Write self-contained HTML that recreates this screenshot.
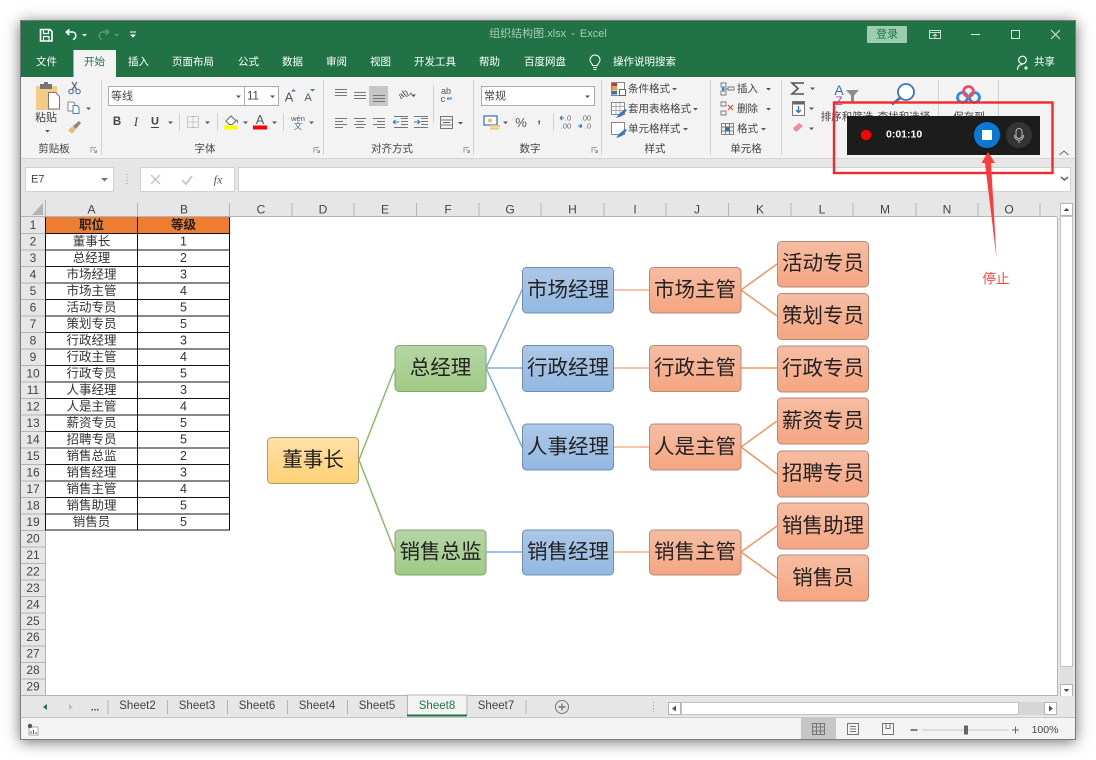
<!DOCTYPE html>
<html><head><meta charset="utf-8"><style>
html,body{margin:0;padding:0;background:#fff;width:1096px;height:760px;overflow:hidden}
#w{position:absolute;left:20px;top:20px;width:1056px;height:720px;box-shadow:0 2px 14px rgba(0,0,0,.55);background:#fff}
svg{position:absolute;left:0;top:0;filter:blur(.3px)}
text{font-family:"Liberation Sans","Noto Sans CJK SC",sans-serif;dominant-baseline:central;font-size:10.5px;fill:#444}
.m{text-anchor:middle}
.tab{fill:#fff;font-size:10.5px;text-anchor:middle}
.rb{fill:#444;font-size:10.5px}
.grp{fill:#444;font-size:10.5px;text-anchor:middle}
.hd{fill:#444;font-size:12px;text-anchor:middle}
.c{fill:#333;font-size:12.5px;text-anchor:middle}
.s{fill:#222;font-size:20.5px;text-anchor:middle}
.sh{fill:#444;font-size:11.5px;text-anchor:middle}
.ar{fill:#555}
</style></head><body><div id="w"></div>
<svg width="1096" height="760" viewBox="0 0 1096 760" xmlns="http://www.w3.org/2000/svg">
<defs>
<linearGradient id="gy" x1="0" y1="0" x2="0" y2="1"><stop offset="0" stop-color="#ffe0a8"/><stop offset="1" stop-color="#ffd175"/></linearGradient>
<linearGradient id="gg" x1="0" y1="0" x2="0" y2="1"><stop offset="0" stop-color="#b5d5a5"/><stop offset="1" stop-color="#a0ca84"/></linearGradient>
<linearGradient id="gb" x1="0" y1="0" x2="0" y2="1"><stop offset="0" stop-color="#adc7e6"/><stop offset="1" stop-color="#93b8e2"/></linearGradient>
<linearGradient id="go" x1="0" y1="0" x2="0" y2="1"><stop offset="0" stop-color="#f6bda3"/><stop offset="1" stop-color="#f5a581"/></linearGradient>
</defs>
<!-- window base -->
<rect x="20.5" y="20.5" width="1055" height="719" fill="#e6e6e6" stroke="#7a7a7a"/>
<rect x="21" y="21" width="1054" height="56" fill="#217346"/>
<rect x="21" y="77" width="1054" height="81" fill="#f3f3f3"/>
<rect x="21" y="158" width="1054" height="1" fill="#d4d4d4"/>
<!-- active tab -->
<rect x="73.5" y="50" width="42.5" height="28" fill="#f3f3f3"/>
<!-- QAT -->
<g fill="none" stroke="#fff" stroke-width="1.6">
<path d="M40.5 29.5h9.5l2 2v9.5h-11.5z"/><path d="M43.5 30v3.5h5V30M43.5 41v-4.5h5.5V41" stroke-width="1.2"/>
<path d="M66 32l3.5-2.5M66 32l3.5 3M66.5 32h6c4 0 4.5 6.5 .5 7.5"/>
</g>
<path d="M82 34h5l-2.500 2.500z" fill="#fff"/>
<g fill="none" stroke="#5c9c78" stroke-width="1.4"><path d="M109 32l-3.500-2.500M109 32l-3.500 3M108.500 32h-6c-4 0-4.500 6.500-.5 7.500"/></g>
<path d="M114 34h5l-2.500 2.500z" fill="#5c9c78"/>
<path d="M130 31.500h6v1h-6zM130 34.500h6l-3 3z" fill="#fff"/>
<!-- title -->
<text x="548" y="34" class="m" style="fill:#a6cdb6;font-size:11px;word-spacing:2px">组织结构图.xlsx  -  Excel</text>
<rect x="867" y="26" width="40" height="17" rx="1" fill="#9ccdb0"/>
<text x="887" y="34.500" class="m" style="fill:#217346;font-size:11px">登录</text>
<g fill="none" stroke="#c6dfd0" stroke-width="1"><rect x="929.500" y="30.500" width="11" height="8"/><path d="M929.500 32.500h11M935 38v-4M933 36l2-2 2 2"/>
<path d="M971 34.500h9" stroke="#dcebe2"/><rect x="1011.500" y="30.500" width="8" height="8" stroke="#dcebe2"/><path d="M1051 30l9 9M1060 30l-9 9" stroke="#dcebe2"/></g>
<g fill="none" stroke="#fff" stroke-width="1.1"><circle cx="1022.500" cy="60" r="3.800"/><path d="M1017.500 70c0-4 2-5.500 5-5.500M1024 68h4M1026 66v4"/></g>
<text x="1034" y="62" style="fill:#fff;font-size:10.500px">共享</text>
<!-- tabs -->
<text x="46.500" y="62" class="tab">文件</text>
<text x="94.500" y="62" class="tab" style="fill:#217346">开始</text>
<text x="138.500" y="62" class="tab">插入</text>
<text x="193" y="62" class="tab">页面布局</text>
<text x="248.500" y="62" class="tab">公式</text>
<text x="292.500" y="62" class="tab">数据</text>
<text x="336.500" y="62" class="tab">审阅</text>
<text x="380.500" y="62" class="tab">视图</text>
<text x="435" y="62" class="tab">开发工具</text>
<text x="489.500" y="62" class="tab">帮助</text>
<text x="545" y="62" class="tab">百度网盘</text>
<text x="644.500" y="62" class="tab">操作说明搜索</text>
<g fill="none" stroke="#fff" stroke-width="1"><path d="M593 67.500h4M593.500 69.500h3M592.500 65.500c0-2-2.500-2.800-2.500-5.500a5 5 0 0 1 10 0c0 2.700-2.500 3.500-2.500 5.500z"/></g>
<!-- ribbon separators -->
<g fill="#d2d2d2"><rect x="101" y="80" width="1" height="75"/><rect x="323" y="80" width="1" height="75"/><rect x="473" y="80" width="1" height="75"/><rect x="601" y="80" width="1" height="75"/><rect x="710" y="80" width="1" height="75"/><rect x="781" y="80" width="1" height="75"/><rect x="938" y="80" width="1" height="55"/><rect x="998" y="80" width="1" height="55"/>
<rect x="433" y="85" width="1" height="38"/><rect x="553" y="113" width="1" height="18"/><rect x="179" y="113" width="1" height="18"/><rect x="217" y="113" width="1" height="18"/><rect x="283" y="113" width="1" height="18"/></g>
<!-- clipboard group -->
<rect x="36" y="86" width="21" height="24" fill="#f2cc85"/>
<rect x="40" y="84" width="12" height="5" fill="#777"/><rect x="44" y="82" width="4" height="3" fill="#777"/>
<path d="M48.500 92.500h7l4 4v12.500h-11z" fill="#fff" stroke="#777"/>
<text x="46" y="118" class="m" style="fill:#444;font-size:11px">粘贴</text>
<path d="M45 130h5l-2.500 2.500z" class="ar"/>
<g fill="none" stroke="#4a7fb5" stroke-width="1.200"><circle cx="71" cy="91.500" r="2.200"/><circle cx="78" cy="91.500" r="2.200"/></g>
<path d="M72 90l5-8M77 90l-5-8" stroke="#666" stroke-width="1.200"/>
<path d="M68 102h5l2 2v7h-7z" fill="#fff" stroke="#888"/><path d="M73 105.500h4l2 2v6h-6z" fill="#fff" stroke="#4a7fb5"/>
<path d="M86 107.500h5l-2.500 2.500z" class="ar"/>
<path d="M68 130l5-4 3 3-4 5z" fill="#e6bd7d"/><path d="M73 126l6-5 2 2-5 6z" fill="#8a8a8a"/>
<text x="54" y="149" class="grp">剪贴板</text>
<g fill="none" stroke="#888" stroke-width=".8"><path d="M91 152.500v-5h5M93 149l3.500 3.500M96.500 150v2.500H94"/>
<path d="M314 152.500v-5h5M316 149l3.500 3.500M319.500 150v2.500H317"/><path d="M464 152.500v-5h5M466 149l3.500 3.500M469.500 150v2.500H467"/><path d="M592 152.500v-5h5M594 149l3.500 3.500M597.500 150v2.500H595"/></g>
<!-- font group -->
<rect x="108.500" y="86.500" width="170" height="19" fill="#fff" stroke="#ababab"/><path d="M244.500 86v20" stroke="#ababab"/>
<text x="111" y="96.500" style="fill:#444;font-size:11px">等线</text>
<text x="247" y="96.500" style="fill:#444;font-size:11.500px">11</text>
<path d="M236 95.500h5l-2.500 2.500zM270 95.500h5l-2.500 2.500z" class="ar"/>
<text x="289" y="97" class="m" style="font-size:13px;fill:#555">A</text><text x="308" y="98" class="m" style="font-size:11px;fill:#555">A</text>
<path d="M291 91.500l2.500-2.500 2.500 2.500zM310 89h5l-2.500 2.500z" fill="#3a78b5"/>
<text x="117" y="122" class="m" style="font-weight:bold;font-size:11.500px;fill:#444">B</text>
<text x="136" y="122" class="m" style="font-style:italic;font-family:'Liberation Serif',serif;font-size:12.500px;fill:#444">I</text>
<text x="155" y="121.500" class="m" style="font-weight:bold;font-size:11px;fill:#444">U</text><rect x="151" y="127" width="8" height="1" fill="#444"/>
<path d="M168 121.500h5l-2.500 2.500zM205 121.500h5l-2.500 2.500zM243 121.500h5l-2.500 2.500zM272 121.500h5l-2.500 2.500zM309 121.500h5l-2.500 2.500zM86 107.500z" class="ar"/>
<rect x="187.500" y="116.500" width="11" height="11" fill="none" stroke="#999" stroke-dasharray="1 1"/><path d="M187.500 122h11M193 116.500v11" stroke="#aaa" stroke-dasharray="1 1"/>
<path d="M226 121l5-5 5 5-4 3.500h-2.500z" fill="#fff" stroke="#666"/><path d="M236 119c2 1 2.500 3 1.500 4.500z" fill="#3a78b5"/>
<rect x="224" y="125.500" width="14" height="4" fill="#ffff00"/>
<text x="260" y="120" class="m" style="font-size:12.500px;fill:#555">A</text><rect x="253" y="125.500" width="14" height="4" fill="#f00"/>
<text x="298" y="118.500" class="m" style="font-size:7.500px;fill:#555">wén</text><text x="298" y="126" class="m" style="font-size:8.500px;fill:#2a72b8">文</text>
<text x="205" y="149" class="grp">字体</text>
<!-- alignment -->
<rect x="369" y="86" width="19" height="20" fill="#c6c6c6"/>
<g stroke="#777" stroke-width="1" fill="none">
<path d="M335 89.500h12M335 92.500h12M335 95.500h12"/><path d="M354 92.500h12M354 95.500h12M354 98.500h12"/><path d="M373 95.500h12M373 98.500h12M373 101.500h12"/>
<path d="M335 118.500h12M335 121.500h8M335 124.500h12M335 127.500h8"/><path d="M354 118.500h12M356 121.500h8M354 124.500h12M356 127.500h8"/><path d="M373 118.500h12M377 121.500h8M373 124.500h12M377 127.500h8"/>
<path d="M401 118.500h7M401 121.500h7M401 124.500h7M394 118h0M394 127.500h14M394 116.500h14"/><path d="M421 118.500h7M421 121.500h7M421 124.500h7M414 127.500h14M414 116.500h14"/>
<rect x="440.500" y="116.500" width="12" height="12"/><path d="M440.500 120h12M440.500 125h12"/>
</g>
<path d="M393 122h6M393 122l2.500-2M393 122l2.500 2M420 122h-6M420 122l-2.500-2M420 122l-2.500 2M443 122.500h7" stroke="#2a72b8" fill="none"/>
<text x="403" y="94" class="m" transform="rotate(-35 403 94)" style="font-size:9px;fill:#555">ab</text><path d="M406 97l6-4M412 93l-2 .5" stroke="#777" fill="none"/>
<path d="M411 94.500h5l-2.500 2.500zM458 122h5l-2.500 2.500z" class="ar"/>
<text x="446" y="91" class="m" style="font-size:9px;fill:#555">ab</text><text x="443" y="99" class="m" style="font-size:9px;fill:#555">c</text><path d="M447 99h4v-2M447 99l1.500-1.500" stroke="#2a72b8" fill="none"/>
<text x="392" y="149" class="grp">对齐方式</text>
<!-- number -->
<rect x="481.500" y="86.500" width="113" height="19" fill="#fff" stroke="#ababab"/>
<text x="484" y="96.500" style="fill:#444;font-size:11px">常规</text>
<path d="M585 95.500h5l-2.500 2.500zM503 121.500h5l-2.500 2.500z" class="ar"/>
<rect x="484" y="116" width="13" height="9" fill="#fff" stroke="#2a72b8" stroke-width="1.200"/><circle cx="490" cy="120.500" r="2" fill="#e8b96a"/><rect x="490" y="125" width="10" height="2" fill="#f0c878"/><rect x="490" y="127.500" width="9" height="2" fill="#f0c878"/>
<text x="521" y="122.500" class="m" style="font-size:13px;fill:#555">%</text>
<text x="539" y="118" class="m" style="font-size:13px;font-weight:bold;fill:#555">,</text>
<text x="568" y="118" class="m" style="font-size:7.500px;fill:#666">.0</text><text x="566" y="126" class="m" style="font-size:7.500px;fill:#666">.00</text>
<text x="586" y="118" class="m" style="font-size:7.500px;fill:#666">.00</text><text x="588" y="126" class="m" style="font-size:7.500px;fill:#666">.0</text>
<path d="M560 118h4M560 118l2-2M560 118l2 2M578 126h4M582 126l-2-2M582 126l-2 2" stroke="#2a72b8" fill="none"/>
<text x="530" y="149" class="grp">数字</text>
<!-- styles -->
<rect x="611.500" y="82.500" width="13" height="13" fill="#fff" stroke="#888"/><rect x="612" y="83" width="5" height="3.500" fill="#c0392b"/><rect x="612" y="87" width="5" height="3.500" fill="#e8a33d"/><rect x="612" y="91" width="5" height="3.500" fill="#2a72b8"/><rect x="619.500" y="89.500" width="6" height="6" fill="#fff" stroke="#666"/>
<text x="628" y="89" class="rb">条件格式</text><path d="M672 88h5l-2.500 2.500z" class="ar"/>
<rect x="611.500" y="102.500" width="13" height="12" fill="#fff" stroke="#888"/><path d="M611.500 106.500h13M611.500 110.500h13M616 102.500v12M620 102.500v12" stroke="#aaa"/><path d="M616 118l3-4 6-5 2 1-5 6z" fill="#3a78b5"/>
<text x="628" y="109" class="rb">套用表格格式</text><path d="M693 108h5l-2.500 2.500z" class="ar"/>
<rect x="611.500" y="122.500" width="13" height="12" fill="#fff" stroke="#888"/><path d="M616 138l3-4 6-5 2 1-5 6z" fill="#3a78b5"/>
<text x="628" y="129" class="rb">单元格样式</text><path d="M683 128h5l-2.500 2.500z" class="ar"/>
<text x="655" y="149" class="grp">样式</text>
<!-- cells -->
<g fill="none" stroke="#777" stroke-width=".9"><path d="M721 83h5v4h-5zM721 91h5v4h-5zM728 87h6v3h-6z"/><path d="M721 102h5v4h-5zM721 111h5v4h-5z"/><rect x="721.500" y="123.500" width="12" height="11"/><path d="M721.500 127h12M721.500 131h12M725.500 123.500v11M729.500 123.500v11"/></g>
<path d="M722 89h6M722 89l2-2M722 89l2 2" stroke="#2a72b8" fill="none"/><path d="M728 105l5 5M733 105l-5 5" stroke="#d9572f" fill="none" stroke-width="1.200"/><rect x="725" y="127.500" width="4.500" height="3.500" fill="#2a72b8"/>
<text x="737" y="89" class="rb">插入</text><text x="737" y="109" class="rb">删除</text><text x="737" y="129" class="rb">格式</text>
<path d="M766 88h5l-2.500 2.500zM766 108h5l-2.500 2.500zM761 128h5l-2.500 2.500z" class="ar"/>
<text x="746" y="149" class="grp">单元格</text>
<!-- editing -->
<path d="M804 83h-12l6 5.500-6 5.500h12" fill="none" stroke="#555" stroke-width="1.600"/>
<rect x="792.500" y="101.500" width="12" height="14" fill="#fff" stroke="#777"/><rect x="793" y="102" width="11" height="2.500" fill="#666"/><path d="M798.500 106v6M796 110l2.500 2.500 2.500-2.500" stroke="#2a72b8" fill="none" stroke-width="1.300"/>
<path d="M793 128l6-5 4 3-6 5.500h-2z" fill="#ec8f9f"/>
<path d="M810 87.500h5l-2.500 2.500zM809 107.500h5l-2.500 2.500zM809 127.500h5l-2.500 2.500z" class="ar"/>
<text x="839" y="90" class="m" style="font-size:14px;fill:#2a72b8">A</text><text x="839" y="101" class="m" style="font-size:12px;fill:#8a5cbf">Z</text>
<path d="M846 90h13l-5 5.500v6h-3v-6z" fill="#8c8c8c"/>
<circle cx="906" cy="92" r="8" fill="#fff" stroke="#3a78b5" stroke-width="1.800"/><path d="M900 98l-8 6.500" stroke="#3a78b5" stroke-width="2.600"/>
<circle cx="962.500" cy="97.500" r="5" fill="none" stroke="#2a8de0" stroke-width="2.800"/><circle cx="974.500" cy="97.500" r="5" fill="none" stroke="#2a8de0" stroke-width="2.800"/><circle cx="968.500" cy="91.500" r="5" fill="none" stroke="#e8506a" stroke-width="2.800"/>
<text x="847" y="117" class="m" style="fill:#444;font-size:10.500px">排序和筛选</text>
<text x="904" y="117" class="m" style="fill:#444;font-size:10.500px">查找和选择</text>
<text x="969" y="117" class="m" style="fill:#444;font-size:10.500px">保存到</text>
<path d="M1059.500 155l4.500-4 4.500 4" fill="none" stroke="#666"/>
<!-- formula bar -->
<rect x="25.500" y="167.500" width="88" height="24" fill="#fff" stroke="#d2d2d2"/>
<text x="31" y="179.500" style="font-size:11px;fill:#444">E7</text><path d="M101 178h7l-3.500 3.500z" fill="#777"/>
<path d="M127 174v1M127 177v1M127 180v1M127 183v1" stroke="#999"/>
<rect x="140.500" y="167.500" width="94" height="24" fill="#fff" stroke="#d2d2d2"/>
<path d="M151 175l9 9M160 175l-9 9" stroke="#c6c6c6" stroke-width="1.500"/><path d="M182 180l4 4 6-8" fill="none" stroke="#c6c6c6" stroke-width="1.800"/>
<text x="218" y="179.500" class="m" style="font-family:'Liberation Serif',serif;font-style:italic;font-size:12px;fill:#555">fx</text>
<rect x="238.500" y="167.500" width="832" height="24" fill="#fff" stroke="#d2d2d2"/>
<path d="M1061 177l3.500 3 3.500-3" fill="none" stroke="#666" stroke-width="1.500"/>
<!-- sheet -->
<rect x="45" y="217" width="1012" height="478" fill="#fff"/>
<rect x="21" y="200" width="1036" height="17" fill="#e6e6e6"/>
<rect x="21" y="217" width="24" height="478" fill="#e6e6e6"/>
<path d="M43 203v12H32z" fill="#b4b4b4"/>
<g stroke="#b4b4b4" fill="none">
<path d="M21 216.500h1036M45.500 200v495M137.500 203v14M229.500 203v14M292 203v14M354 203v14M416.500 203v14M479 203v14M541 203v14M604 203v14M666 203v14M728.500 203v14M791 203v14M853 203v14M916 203v14M978 203v14M1040 203v14"/>
<path d="M21 233.500h24M21 250h24M21 266.500h24M21 283h24M21 299.500h24M21 316h24M21 332.500h24M21 349h24M21 365.500h24M21 382h24M21 398.500h24M21 415h24M21 431.500h24M21 448h24M21 464.500h24M21 481h24M21 497.500h24M21 514h24M21 530.500h24M21 547h24M21 563.500h24M21 580h24M21 596.500h24M21 613h24M21 629.500h24M21 646h24M21 662.500h24M21 679h24M21 695.500h1037M1057.500 217v479"/>
</g>
<text x="91.500" y="209.500" class="hd">A</text><text x="184" y="209.500" class="hd">B</text><text x="261" y="209.500" class="hd">C</text><text x="323" y="209.500" class="hd">D</text><text x="385" y="209.500" class="hd">E</text><text x="448" y="209.500" class="hd">F</text><text x="510" y="209.500" class="hd">G</text><text x="572.500" y="209.500" class="hd">H</text><text x="635" y="209.500" class="hd">I</text><text x="697" y="209.500" class="hd">J</text><text x="760" y="209.500" class="hd">K</text><text x="822" y="209.500" class="hd">L</text><text x="885" y="209.500" class="hd">M</text><text x="947" y="209.500" class="hd">N</text><text x="1009" y="209.500" class="hd">O</text>
<text x="33" y="225.200" class="hd">1</text><text x="33" y="241.700" class="hd">2</text><text x="33" y="258.200" class="hd">3</text><text x="33" y="274.700" class="hd">4</text><text x="33" y="291.200" class="hd">5</text><text x="33" y="307.600" class="hd">6</text><text x="33" y="324.100" class="hd">7</text><text x="33" y="340.600" class="hd">8</text><text x="33" y="357.100" class="hd">9</text><text x="33" y="373.600" class="hd">10</text><text x="33" y="390" class="hd">11</text><text x="33" y="406.500" class="hd">12</text><text x="33" y="423" class="hd">13</text><text x="33" y="439.500" class="hd">14</text><text x="33" y="456" class="hd">15</text><text x="33" y="472.400" class="hd">16</text><text x="33" y="488.900" class="hd">17</text><text x="33" y="505.400" class="hd">18</text><text x="33" y="521.900" class="hd">19</text><text x="33" y="538.400" class="hd">20</text><text x="33" y="554.800" class="hd">21</text><text x="33" y="571.300" class="hd">22</text><text x="33" y="587.800" class="hd">23</text><text x="33" y="604.300" class="hd">24</text><text x="33" y="620.800" class="hd">25</text><text x="33" y="637.200" class="hd">26</text><text x="33" y="653.700" class="hd">27</text><text x="33" y="670.200" class="hd">28</text><text x="33" y="686.700" class="hd">29</text>
<!-- table -->
<rect x="45.500" y="217" width="184" height="16.500" fill="#ed7d31"/>
<path d="M45.500 217v313M137.500 217v313M229.500 217v313M45 233.500h185M45 250h185M45 266.500h185M45 283h185M45 299.500h185M45 316h185M45 332.500h185M45 349h185M45 365.500h185M45 382h185M45 398.500h185M45 415h185M45 431.500h185M45 448h185M45 464.500h185M45 481h185M45 497.500h185M45 514h185M45 530h185" stroke="#111" fill="none"/>
<text x="91.500" y="225.200" class="c" style="font-weight:bold;fill:#222">职位</text><text x="183.500" y="225.200" class="c" style="font-weight:bold;fill:#222">等级</text>
<text x="91.500" y="241.700" class="c">董事长</text><text x="183.500" y="241.700" class="c">1</text>
<text x="91.500" y="258.200" class="c">总经理</text><text x="183.500" y="258.200" class="c">2</text>
<text x="91.500" y="274.700" class="c">市场经理</text><text x="183.500" y="274.700" class="c">3</text>
<text x="91.500" y="291.200" class="c">市场主管</text><text x="183.500" y="291.200" class="c">4</text>
<text x="91.500" y="307.600" class="c">活动专员</text><text x="183.500" y="307.600" class="c">5</text>
<text x="91.500" y="324.100" class="c">策划专员</text><text x="183.500" y="324.100" class="c">5</text>
<text x="91.500" y="340.600" class="c">行政经理</text><text x="183.500" y="340.600" class="c">3</text>
<text x="91.500" y="357.100" class="c">行政主管</text><text x="183.500" y="357.100" class="c">4</text>
<text x="91.500" y="373.600" class="c">行政专员</text><text x="183.500" y="373.600" class="c">5</text>
<text x="91.500" y="390" class="c">人事经理</text><text x="183.500" y="390" class="c">3</text>
<text x="91.500" y="406.500" class="c">人是主管</text><text x="183.500" y="406.500" class="c">4</text>
<text x="91.500" y="423" class="c">薪资专员</text><text x="183.500" y="423" class="c">5</text>
<text x="91.500" y="439.500" class="c">招聘专员</text><text x="183.500" y="439.500" class="c">5</text>
<text x="91.500" y="456" class="c">销售总监</text><text x="183.500" y="456" class="c">2</text>
<text x="91.500" y="472.400" class="c">销售经理</text><text x="183.500" y="472.400" class="c">3</text>
<text x="91.500" y="488.900" class="c">销售主管</text><text x="183.500" y="488.900" class="c">4</text>
<text x="91.500" y="505.400" class="c">销售助理</text><text x="183.500" y="505.400" class="c">5</text>
<text x="91.500" y="521.900" class="c">销售员</text><text x="183.500" y="521.900" class="c">5</text>
<!-- connectors -->
<g fill="none" stroke-width="1.500">
<path d="M359 460L395 368M359 460L395 552" stroke="#8abb68"/>
<path d="M486 368L522 290M486 368H522M486 368L522 447M486 552H522" stroke="#7eaedd"/>
<path d="M614 290H649M614 368H649M614 447H649M614 552H649" stroke="#f4b18e"/>
<path d="M741 290L777 264M741 290L777 316M741 368H777M741 447L777 421M741 447L777 474M741 552L777 526M741 552L777 578" stroke="#f0975f"/>
</g>
<!-- nodes -->
<g stroke-width="1">
<rect x="267.500" y="437.500" width="91" height="46" rx="4" fill="url(#gy)" stroke="#b09a6a"/>
<rect x="395" y="345.500" width="91" height="46" rx="4" fill="url(#gg)" stroke="#86a573"/>
<rect x="395" y="530" width="91" height="45" rx="4" fill="url(#gg)" stroke="#86a573"/>
<g fill="url(#gb)" stroke="#6f8db0">
<rect x="522.500" y="267.500" width="91" height="45.500" rx="4"/><rect x="522.500" y="345.500" width="91" height="46" rx="4"/><rect x="522.500" y="424" width="91" height="46" rx="4"/><rect x="522.500" y="530" width="91" height="45" rx="4"/>
</g>
<g fill="url(#go)" stroke="#b58a76">
<rect x="649.500" y="267.500" width="91.500" height="45.500" rx="4"/><rect x="649.500" y="345.500" width="91.500" height="46" rx="4"/><rect x="649.500" y="424" width="91.500" height="46" rx="4"/><rect x="649.500" y="530" width="91.500" height="45" rx="4"/>
<rect x="777.500" y="241.500" width="91" height="45.500" rx="4"/><rect x="777.500" y="293.500" width="91" height="46" rx="4"/><rect x="777.500" y="346" width="91" height="46" rx="4"/><rect x="777.500" y="398" width="91" height="46" rx="4"/><rect x="777.500" y="451" width="91" height="46" rx="4"/><rect x="777.500" y="503" width="91" height="46" rx="4"/><rect x="777.500" y="555" width="91" height="46" rx="4"/>
</g>
</g>
<text x="313" y="460" class="s">董事长</text>
<text x="440.500" y="368" class="s">总经理</text>
<text x="440.500" y="552" class="s">销售总监</text>
<text x="568" y="290" class="s">市场经理</text><text x="568" y="368" class="s">行政经理</text><text x="568" y="447" class="s">人事经理</text><text x="568" y="552" class="s">销售经理</text>
<text x="695" y="290" class="s">市场主管</text><text x="695" y="368" class="s">行政主管</text><text x="695" y="447" class="s">人是主管</text><text x="695" y="552" class="s">销售主管</text>
<text x="823" y="263.500" class="s">活动专员</text><text x="823" y="316" class="s">策划专员</text><text x="823" y="368.500" class="s">行政专员</text><text x="823" y="421" class="s">薪资专员</text><text x="823" y="473.500" class="s">招聘专员</text><text x="823" y="526" class="s">销售助理</text><text x="823" y="578" class="s">销售员</text>
<!-- v scrollbar -->
<rect x="1060" y="203" width="13" height="493" fill="#e0e0e0"/>
<rect x="1060.500" y="203.500" width="12" height="12" fill="#fff" stroke="#b4b4b4"/><path d="M1063.500 211h6l-3-3z" fill="#555"/>
<rect x="1060.500" y="216.500" width="12" height="450" fill="#fff" stroke="#c2c2c2"/>
<rect x="1060.500" y="684.500" width="12" height="12" fill="#fff" stroke="#b4b4b4"/><path d="M1063.500 689h6l-3 3z" fill="#555"/>
<!-- sheet tabs -->
<rect x="21" y="696" width="1054" height="22" fill="#e6e6e6"/>
<rect x="21" y="717" width="1054" height="1" fill="#c8c8c8"/>
<rect x="21" y="718" width="1054" height="21" fill="#f3f3f3"/>
<path d="M43 707l4-3v6z" fill="#217346"/><path d="M73 707l-4-3v6z" fill="#c0c0c0"/>
<text x="95" y="708" class="m" style="font-weight:bold;font-size:10px;fill:#444">...</text>
<rect x="407" y="695" width="60" height="20" fill="#f3f3f3"/>
<path d="M407.500 715v-20h59.500v20" fill="none" stroke="#b4b4b4"/>
<rect x="407" y="714.500" width="60" height="2" fill="#217346"/>
<path d="M108 700v14M167.500 700v14M227.500 700v14M287.500 700v14M347.500 700v14M526 700v14" stroke="#b4b4b4"/>
<text x="137.500" y="706" class="sh">Sheet2</text><text x="197" y="706" class="sh">Sheet3</text><text x="257" y="706" class="sh">Sheet6</text><text x="317" y="706" class="sh">Sheet4</text><text x="377" y="706" class="sh">Sheet5</text><text x="437" y="706" class="sh" style="fill:#217346">Sheet8</text><text x="496" y="706" class="sh">Sheet7</text>
<circle cx="562" cy="707" r="6.500" fill="none" stroke="#777"/><path d="M558.500 707h7M562 703.500v7" stroke="#777" stroke-width="1.400"/>
<path d="M653.500 702v1M653.500 705v1M653.500 708v1M653.500 711v1" stroke="#999"/>
<rect x="668" y="702" width="389" height="13" fill="#d6d6d6"/>
<rect x="668.500" y="702.500" width="12" height="12" fill="#fff" stroke="#b4b4b4"/><path d="M672 708.500l4-3v6z" fill="#555"/>
<rect x="681.500" y="702.500" width="337" height="12" fill="#fff" stroke="#c2c2c2"/>
<rect x="1044.500" y="702.500" width="12" height="12" fill="#fff" stroke="#b4b4b4"/><path d="M1053 708.500l-4-3v6z" fill="#555"/>
<!-- status bar -->
<rect x="29" y="727" width="9" height="8" fill="#fff" stroke="#888" stroke-width=".7"/><circle cx="30" cy="726" r="2.200" fill="#555"/><path d="M31 734v-3M33.500 734v-4M36 734v-2" stroke="#666"/>
<rect x="801" y="718" width="35" height="21" fill="#c6c6c6"/>
<g fill="none" stroke="#777"><rect x="812.500" y="723.500" width="12" height="11"/><path d="M812.500 727h12M812.500 731h12M816.500 723.500v11M820.500 723.500v11"/>
<rect x="847.500" y="723.500" width="11" height="11"/><path d="M850 726.500h6M850 729h6M850 731.500h6"/>
<path d="M882.500 723.500h11v11h-11zM886 723.500v5h4v-5"/></g>
<path d="M910.500 730h7" stroke="#555" stroke-width="1.500"/><path d="M1012 730h7M1015.500 726.500v7" stroke="#666"/>
<rect x="922" y="729.500" width="87" height="1" fill="#c4c4c4"/><rect x="964" y="725.500" width="4" height="9" fill="#666"/>
<text x="1045" y="730" class="m" style="font-size:10.500px;fill:#444">100%</text>
<!-- recorder overlay -->
<rect x="847" y="116" width="193" height="39" fill="#1c1c1c"/>
<circle cx="866" cy="135" r="5.200" fill="#ff0000"/>
<text x="886" y="134.500" style="fill:#fff;font-size:10.500px;font-weight:bold">0:01:10</text>
<circle cx="987" cy="135" r="13" fill="#0a78d4"/><rect x="982" y="130" width="10" height="10" fill="#fff"/>
<circle cx="1019" cy="135" r="13" fill="#343434"/><rect x="1016" y="128.500" width="6" height="10" rx="3" fill="none" stroke="#bbb"/><path d="M1014.500 135c0 7 9 7 9 0M1019 141v2" fill="none" stroke="#bbb"/>
<rect x="834" y="102.500" width="218.500" height="70.500" fill="none" stroke="#f4272d" stroke-width="2.400"/>
<path d="M988 152L995 163H991L996.500 258L985 163H981.500Z" fill="#ff3b3b"/>
<text x="996" y="279" class="m" style="fill:#ff4040;font-size:13.500px">停止</text>
</svg></body></html>
